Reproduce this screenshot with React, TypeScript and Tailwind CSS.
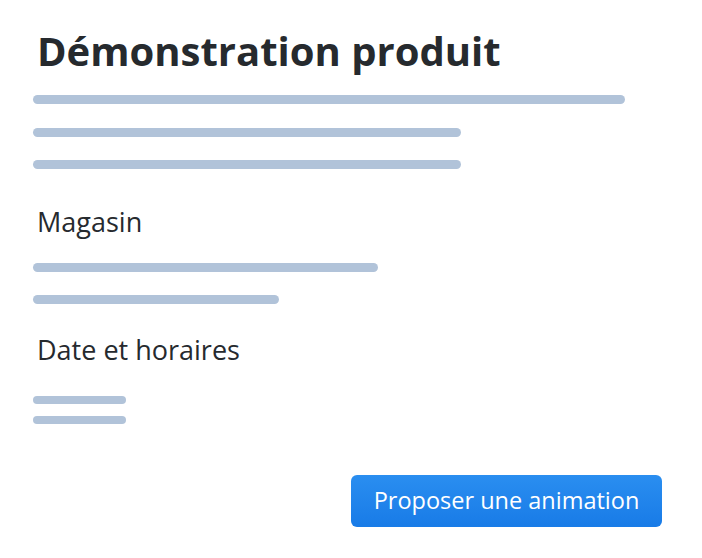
const Bar = ({ w, h = 'h-[9px]' }: { w: string; h?: string }) => (
  <div className={`${w} ${h} rounded-full bg-[#b1c3d9]`} />
);

export default function App() {
  return (
    <div className="w-[702px] h-[558px] bg-white px-[33px] pt-[24px] font-['Open_Sans',sans-serif] text-[#262a2e]">
      <h1 className="text-[40px] leading-[54px] font-bold pl-[4px]">Démonstration produit</h1>

      <div className="mt-[17px] flex flex-col gap-[23.5px]">
        <Bar w="w-[592px]" />
        <Bar w="w-[428px]" />
        <Bar w="w-[428px]" />
      </div>

      <h2 className="mt-[35px] text-[27px] leading-[36px] font-medium pl-[4px]">Magasin</h2>
      <div className="mt-[23px] flex flex-col gap-[23px]">
        <Bar w="w-[345px]" />
        <Bar w="w-[246px]" />
      </div>

      <h2 className="mt-[28px] text-[27px] leading-[36px] font-medium pl-[4px]">Date et horaires</h2>
      <div className="mt-[28px] flex flex-col gap-[12px]">
        <Bar w="w-[93px]" h="h-[8px]" />
        <Bar w="w-[93px]" h="h-[8px]" />
      </div>

      <div className="mt-[51px] flex justify-end pr-[7px]">
        <button className="w-[311px] h-[52px] rounded-[6px] bg-gradient-to-b from-[#2a8ef0] to-[#187be7] text-white text-[23.5px] font-medium">
          Proposer une animation
        </button>
      </div>
    </div>
  );
}
